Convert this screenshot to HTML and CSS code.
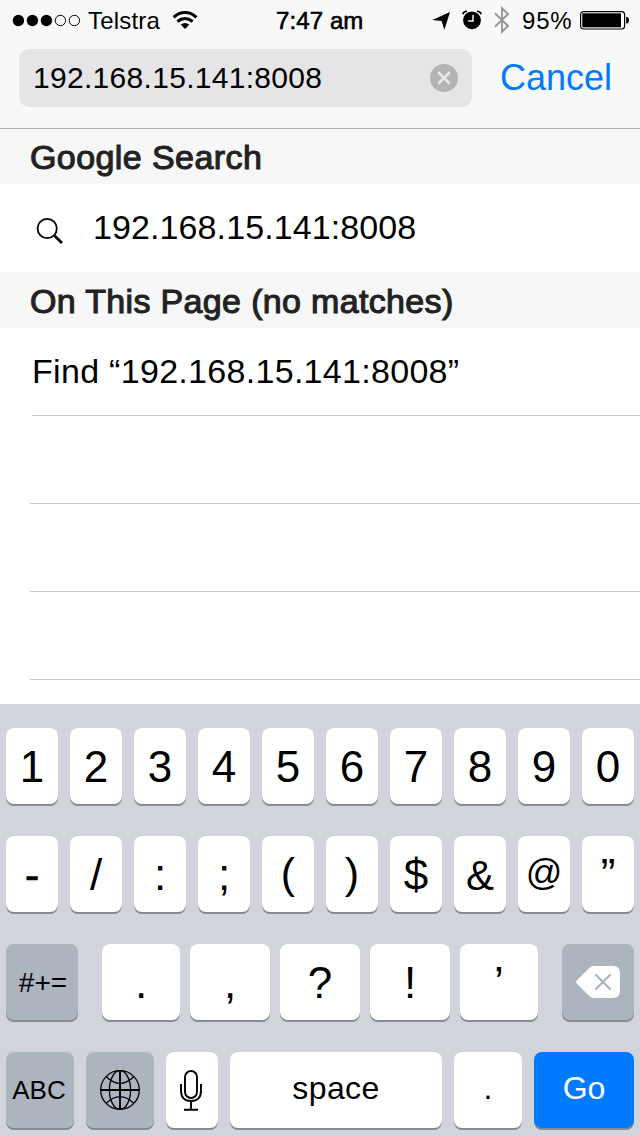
FILE: index.html
```
<!DOCTYPE html>
<html lang="en">
<head>
<meta charset="utf-8">
<title>Search</title>
<link rel="stylesheet" href="styles.css">
</head>
<body>
<div class="screen">
  <header class="chrome">
    <div class="status">
      <div class="status-left">
        <svg class="signal" width="70" height="14" viewBox="0 0 70 14"><g fill="#000"><circle cx="6.4" cy="7.5" r="5.7"/><circle cx="20.4" cy="7.5" r="5.7"/><circle cx="34.4" cy="7.5" r="5.7"/></g><g fill="none" stroke="#000"><circle cx="48.4" cy="7.5" r="5.2"/><circle cx="62.4" cy="7.5" r="5.2"/></g></svg>
        <span class="carrier">Telstra</span>
        <svg class="wifi" width="26" height="20" viewBox="0 0 26 20"><g fill="none" stroke="#000" stroke-width="3"><path d="M1.6 7.4Q6.6 2.5 13 2.5T24.4 7.4"/><path d="M5.4 11.6Q9 8.5 13 8.5T20.6 11.6"/></g><path d="M8.7 14.6Q13 11.4 17.3 14.6L13 18.9Z"/></svg>
      </div>
      <span class="clock">7:47 am</span>
      <div class="status-right">
        <svg class="location" width="18" height="18" viewBox="0 0 18 18"><path d="M18 0L12.4 17.8L9.6 8.9L.2 8Z"/></svg>
        <svg class="alarm" width="20" height="20" viewBox="0 0 20 20"><circle cx="10" cy="10.3" r="8.9"/><path d="M.8 4.2Q1.5 1.4 5 1.2M15 1.2Q18.5 1.4 19.2 4.2" fill="none" stroke="#000" stroke-width="1.5"/><path d="M11 5V11H6.2" fill="none" stroke="#f8f8f8" stroke-width="1.5"/></svg>
        <svg class="bluetooth" width="16" height="28" viewBox="0 0 16 28"><path d="M1 7.2L14 20L8 25.6V2.4L14 8L1 20.8" fill="none" stroke="#989898" stroke-width="2"/></svg>
        <span class="percent">95%</span>
        <svg class="battery" width="50" height="20" viewBox="0 0 50 20"><rect x=".6" y="1.6" width="44" height="17.4" rx="3" fill="#fff" stroke="#000" stroke-width="1.2"/><rect x="2.3" y="3.3" width="38.7" height="14"/><path d="M46.2 7H47.5Q49 8 49 10.3T47.5 13.6H46.2Z"/></svg>
      </div>
    </div>
    <div class="address-bar">
      <div class="field">
        <span class="url">192.168.15.141:8008</span>
        <svg width="28" height="28" viewBox="0 0 28 28"><circle cx="14" cy="14" r="14" fill="#b4b4b5"/><path d="M9 9L19 19M19 9L9 19" stroke="#e8e8ea" stroke-width="2.6" stroke-linecap="round"/></svg>
      </div>
      <span class="cancel">Cancel</span>
    </div>
  </header>

  <main class="results">
    <h2 class="heading"><span>Google Search</span></h2>
    <div class="row suggestion">
      <svg width="28" height="28" viewBox="0 0 28 28" fill="none" stroke="#000"><circle cx="11.2" cy="11.5" r="9.6" stroke-width="1.8"/><path d="M18 18.2L26 26" stroke-width="2.8"/></svg>
      <span>192.168.15.141:8008</span>
    </div>
    <h2 class="heading page-heading"><span>On This Page (no matches)</span></h2>
    <div class="row find"><span>Find “192.168.15.141:8008”</span></div>
    <div class="row empty"></div>
    <div class="row empty"></div>
    <div class="row empty"></div>
  </main>

  <section class="keyboard">
    <div class="keys ten">
      <div class="key">1</div><div class="key">2</div><div class="key">3</div><div class="key">4</div><div class="key">5</div><div class="key">6</div><div class="key">7</div><div class="key">8</div><div class="key">9</div><div class="key">0</div>
    </div>
    <div class="keys ten">
      <div class="key hyphen">-</div><div class="key">/</div><div class="key">:</div><div class="key">;</div><div class="key paren">(</div><div class="key paren">)</div><div class="key">$</div><div class="key ampersand">&amp;</div><div class="key at">@</div><div class="key">”</div>
    </div>
    <div class="keys punctuation">
      <div class="key dark symbols">#+=</div>
      <div class="marks"><div class="key">.</div><div class="key">,</div><div class="key">?</div><div class="key">!</div><div class="key">’</div></div>
      <div class="key dark delete"><svg width="44" height="32" viewBox="0 0 44 32"><path d="M1 14.2L13 2.2Q15.4 0 18 0H37Q44 0 44 7V25Q44 32 37 32H18Q15.4 32 13 29.8L1 17.8Q-.8 16 1 14.2Z" fill="#fff"/><path d="M20 9L34 23M34 9L20 23" stroke="#acb4bd" stroke-width="2.2" stroke-linecap="round"/></svg></div>
    </div>
    <div class="keys bottom">
      <div class="key dark abc">ABC</div>
      <div class="key dark"><svg width="40" height="40" viewBox="0 0 40 40" fill="none" stroke="#000" stroke-width="1.3"><circle cx="20" cy="20" r="19.3"/><ellipse cx="20" cy="20" rx="10.6" ry="19.3"/><path d="M6.3 6.7Q20 20 33.7 6.7M6.3 33.3Q20 20 33.7 33.3"/><path d="M20 1V39M1 20H39" stroke-width="1.9"/></svg></div>
      <div class="key mic"><svg width="24" height="42" viewBox="0 0 24 42" fill="none" stroke="#000" stroke-width="1.9"><rect x="6" y="1" width="12" height="27" rx="6"/><path d="M2 14V20.5Q2 31 12 31T22 20.5V14M12 31V39.5M5 39.8H19"/></svg></div>
      <div class="key space">space</div>
      <div class="key dot">.</div>
      <div class="key go">Go</div>
    </div>
  </section>
</div>
</body>
</html>
```
FILE: styles.css
```
* { box-sizing: border-box; }
body { margin: 0; background: #fff; color: #000; font-family: "Liberation Sans", Arial, sans-serif; }
svg { display: block; flex: none; }
span { white-space: nowrap; }
.screen { width: 640px; height: 1136px; display: flex; flex-direction: column; overflow: hidden; }

.chrome { height: 129px; background: #f8f8f8; border-bottom: 1px solid #b2b2b2; }
.status { height: 49px; display: grid; grid-template-columns: 276px 1fr 208px; font-size: 24px; line-height: 42px; }
.status-left, .status-right { display: flex; align-items: flex-start; }
.status-left { padding-left: 12px; }
.signal { margin-top: 13px; }
.carrier { width: 84px; padding-left: 6px; letter-spacing: 0.2px; }
.wifi { margin: 10px 0 0 6px; }
.clock { -webkit-text-stroke: 0.6px #000; letter-spacing: 0.1px; }
.location { margin-top: 12px; }
.alarm { margin: 10px 0 0 12px; }
.bluetooth { margin: 6px 0 0 12px; }
.percent { margin-left: 11px; width: 59px; padding-left: 1px; letter-spacing: 0.8px; }
.battery { margin-top: 10px; }

.address-bar { display: flex; padding-left: 19px; }
.field { width: 453px; height: 58px; border-radius: 10px; background: #e5e5e7; display: flex; align-items: center; justify-content: space-between; padding: 0 14px; }
.url { font-size: 30px; line-height: 58px; letter-spacing: 0.3px; }
.cancel { margin-left: 28px; font-size: 36px; line-height: 57px; color: #007aff; letter-spacing: 0; }

.results { height: 575px; }
.heading { margin: 0; height: 55px; background: #f7f7f7; padding-left: 30px; font-size: 34px; font-weight: 400; line-height: 57px; color: #222; -webkit-text-stroke: 1.1px #222; letter-spacing: 0.42px; }
.page-heading { height: 56px; line-height: 58px; letter-spacing: 0.34px; }
.row { height: 88px; font-size: 34px; line-height: 87px; }
.suggestion { display: flex; align-items: center; gap: 29px; padding-left: 36px; }
.suggestion svg { margin-top: 6px; }
.suggestion span { line-height: 86px; height: 88px; letter-spacing: 0.1px; }
.find { margin-left: 32px; border-bottom: 1px solid #c8c7cc; letter-spacing: 0.3px; }
.empty { margin-left: 30px; border-bottom: 1px solid #c8c7cc; }

.keyboard { height: 432px; padding: 24px 6px 8px; background: #d1d5db; display: flex; flex-direction: column; gap: 32px; }
.keys { display: flex; height: 76px; }
.key { border-radius: 8px; background: #fff; box-shadow: 0 2px 0 #888c90; display: flex; align-items: center; justify-content: center; font-size: 44px; line-height: 76px; height: 76px; padding-top: 2px; }
.ten { gap: 12px; }
.ten .key { flex: 1; min-width: 0; }
.ten .at { font-size: 36px; padding: 0 0 3px; }
.ten .paren { font-size: 43px; padding: 0 0 3px; }
.ten .hyphen { -webkit-text-stroke: 0.5px #000; }
.ten .ampersand { font-size: 42px; padding-top: 3px; }
.dark { background: #acb4bd; padding-top: 0; }
.punctuation { justify-content: space-between; }
.marks { display: grid; grid-template-columns: 78px 80px 80px 80px 78px; gap: 10px; }
.symbols { width: 72px; font-size: 28px; padding: 1px 0 0 2px; }
.delete { width: 72px; }
.bottom { display: grid; grid-template-columns: 68px 68px 52px 212px 68px 100px; gap: 12px; }
.abc { font-size: 26px; line-height: 76px; padding: 0 2px 0 0; }
.mic { padding: 2px 2px 0 0; }
.space { font-size: 32px; letter-spacing: 0.4px; padding: 0 0 4px; }
.dot { font-size: 32px; padding: 0 0 4px; }
.go { background: #007aff; color: #fff; font-size: 32px; padding: 0 0 4px; }
```
